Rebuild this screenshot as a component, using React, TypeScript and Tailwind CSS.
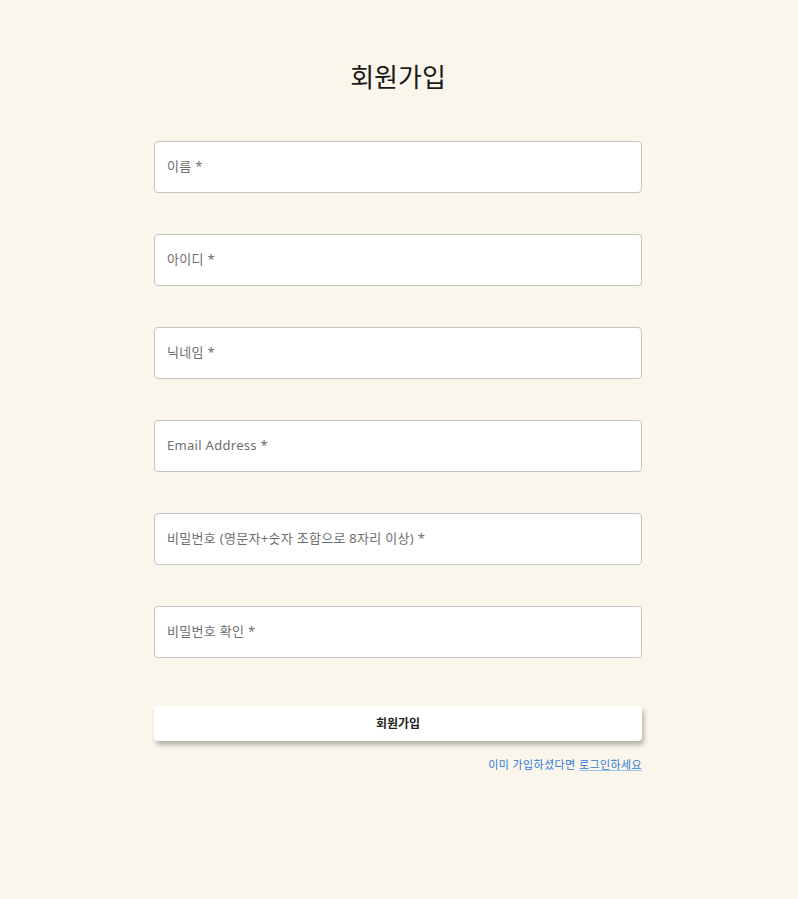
const fields = [
	"이름 *",
	"아이디 *",
	"닉네임 *",
	"Email Address *",
	"비밀번호 (영문자+숫자 조합으로 8자리 이상) *",
	"비밀번호 확인 *",
];

export default function App() {
	return (
		<div className="min-h-[899px] bg-[#faf6eb] font-['Noto_Sans','Noto_Sans_CJK_KR',sans-serif]">
			<div className="w-[488px] ml-[154px] pt-[57px]">
				<h1 className="text-center text-[26px] leading-[40px] text-[#1a1a1a]">
					회원가입
				</h1>
				<div className="mt-[44px] flex flex-col gap-[41px]">
					{fields.map((label) => (
						<div
							key={label}
							className="h-[52px] bg-white border border-[#c4c4c4] rounded-[4px] px-[12px] pt-[11px]"
						>
							<span className="text-[13px] leading-[18px] text-[#6e6e6e] tracking-[0.3px]">
								{label}
							</span>
						</div>
					))}
				</div>
				<button
					type="button"
					className="mt-[48px] w-full h-[35px] bg-white rounded-[4px] text-[12px] font-semibold text-[#222] shadow-[2px_4px_5px_rgba(0,0,0,0.28)]"
				>
					회원가입
				</button>
				<p className="mt-[16px] text-right text-[11px] tracking-[0.4px] text-[#2f7bd9]">
					이미 가입하셨다면 <span className="underline decoration-[#9cc1ee]">로그인하세요</span>
				</p>
			</div>
		</div>
	);
}
